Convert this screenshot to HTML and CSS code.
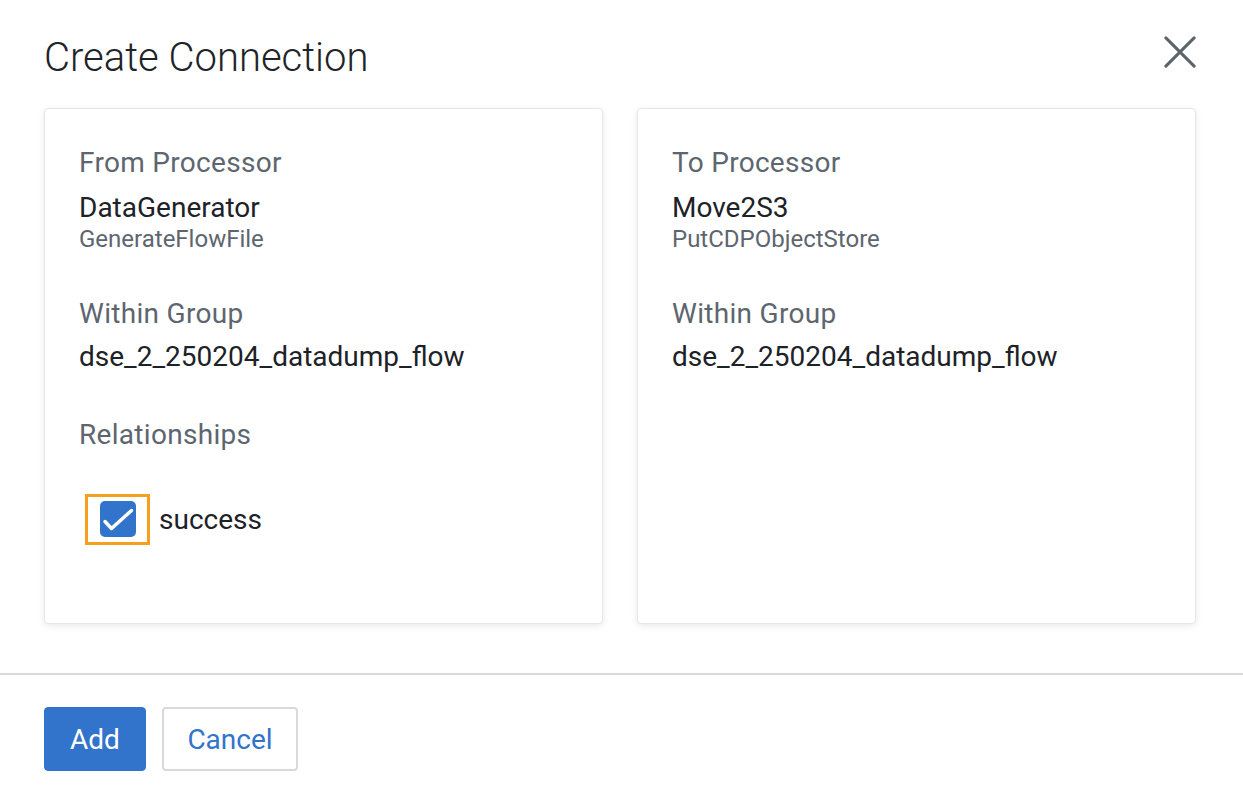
FILE: index.html
```html
<!DOCTYPE html>
<html lang="en">
<head>
<meta charset="utf-8">
<title>Create Connection</title>
<link rel="stylesheet" href="styles.css">
</head>
<body>
<div class="dialog">
  <header class="dialog-header">
    <h1 class="title">Create Connection</h1>
    <button class="close" type="button" aria-label="Close">
      <svg width="34" height="34" viewBox="0 0 34 34"><path d="M2 2 L32 32 M32 2 L2 32" stroke="#5b636b" stroke-width="3.2" stroke-linecap="round" fill="none"/></svg>
    </button>
  </header>
  <div class="cards">
    <section class="card">
      <div class="label">From Processor</div>
      <div class="value">DataGenerator</div>
      <div class="sub">GenerateFlowFile</div>
      <div class="label group-label">Within Group</div>
      <div class="value group-value">dse_2_250204_datadump_flow</div>
      <div class="label rel-label">Relationships</div>
      <label class="check">
        <span class="box">
          <svg width="36" height="36" viewBox="0 0 36 36"><path d="M5 20.5 L11.5 27.5 L31.5 9.5" stroke="#fff" stroke-width="3.5" stroke-linecap="round" stroke-linejoin="round" fill="none"/></svg>
        </span>
        <span class="check-text">success</span>
      </label>
    </section>
    <section class="card">
      <div class="label">To Processor</div>
      <div class="value">Move2S3</div>
      <div class="sub">PutCDPObjectStore</div>
      <div class="label group-label">Within Group</div>
      <div class="value group-value">dse_2_250204_datadump_flow</div>
    </section>
  </div>
  <footer class="dialog-footer">
    <button class="btn btn-primary" type="button">Add</button>
    <button class="btn btn-secondary" type="button">Cancel</button>
  </footer>
</div>
</body>
</html>
```
FILE: styles.css
```css
* { box-sizing: border-box; }
html, body { margin: 0; padding: 0; background: #fff; }
body {
  font-family: Roboto, "Liberation Sans", Arial, sans-serif;
  color: #1d2228;
}
.dialog {
  width: 1243px;
  height: 803px;
  display: flex;
  flex-direction: column;
}
.dialog-header {
  display: flex;
  justify-content: space-between;
  align-items: flex-start;
  padding: 34px 46px 0 44px;
  height: 108px;
}
.title {
  margin: 0;
  font-size: 40px;
  line-height: 48px;
  font-weight: 300;
  color: #1f2429;
}
.close {
  border: 0;
  background: none;
  padding: 0;
  margin-top: 2px;
  margin-right: 1px;
  width: 32px;
  height: 32px;
  cursor: pointer;
}
.close svg { display: block; width: 32px; height: 32px; }
.cards {
  display: grid;
  grid-template-columns: 559px 559px;
  gap: 34px;
  padding: 0 0 0 44px;
}
.card {
  height: 516px;
  border: 1px solid #e6e6e8;
  border-radius: 4px;
  box-shadow: 0 2px 7px rgba(0, 0, 0, 0.09);
  padding: 36px 34px 0 34px;
  background: #fff;
}
.label {
  font-size: 28px;
  line-height: 36px;
  letter-spacing: 0.3px;
  color: #5d666f;
}
.value {
  font-size: 28px;
  line-height: 34px;
  color: #1d2228;
  margin-top: 10px;
}
.sub {
  font-size: 24px;
  line-height: 28px;
  color: #5d666f;
}
.group-label { margin-top: 43px; }
.group-value { margin-top: 8px; }
.rel-label { margin-top: 43px; }
.check {
  display: inline-flex;
  align-items: center;
  margin-top: 41px;
  margin-left: 6px;
}
.box {
  width: 65px;
  height: 51px;
  border: 3px solid #f5a01c;
  padding: 4px 11px 4px 12px;
  display: block;
}
.box svg {
  display: block;
  width: 36px;
  height: 36px;
  background: #3273cb;
  border-radius: 5px;
}
.check-text {
  font-size: 28px;
  line-height: 34px;
  color: #1d2228;
  margin-left: 9px;
}
.dialog-footer {
  margin-top: auto;
  height: 130px;
  border-top: 2px solid #d9d9dc;
  display: flex;
  align-items: center;
  gap: 16px;
  padding: 0 0 0 44px;
}
.btn {
  font-family: Roboto, "Liberation Sans", Arial, sans-serif;
  font-size: 28px;
  height: 64px;
  border-radius: 4px;
  cursor: pointer;
}
.btn-primary {
  width: 102px;
  background: #3274cb;
  border: 1px solid #3274cb;
  color: #fff;
}
.btn-secondary {
  width: 136px;
  background: #fff;
  border: 2px solid #d9d9dd;
  color: #3274cb;
}
```
